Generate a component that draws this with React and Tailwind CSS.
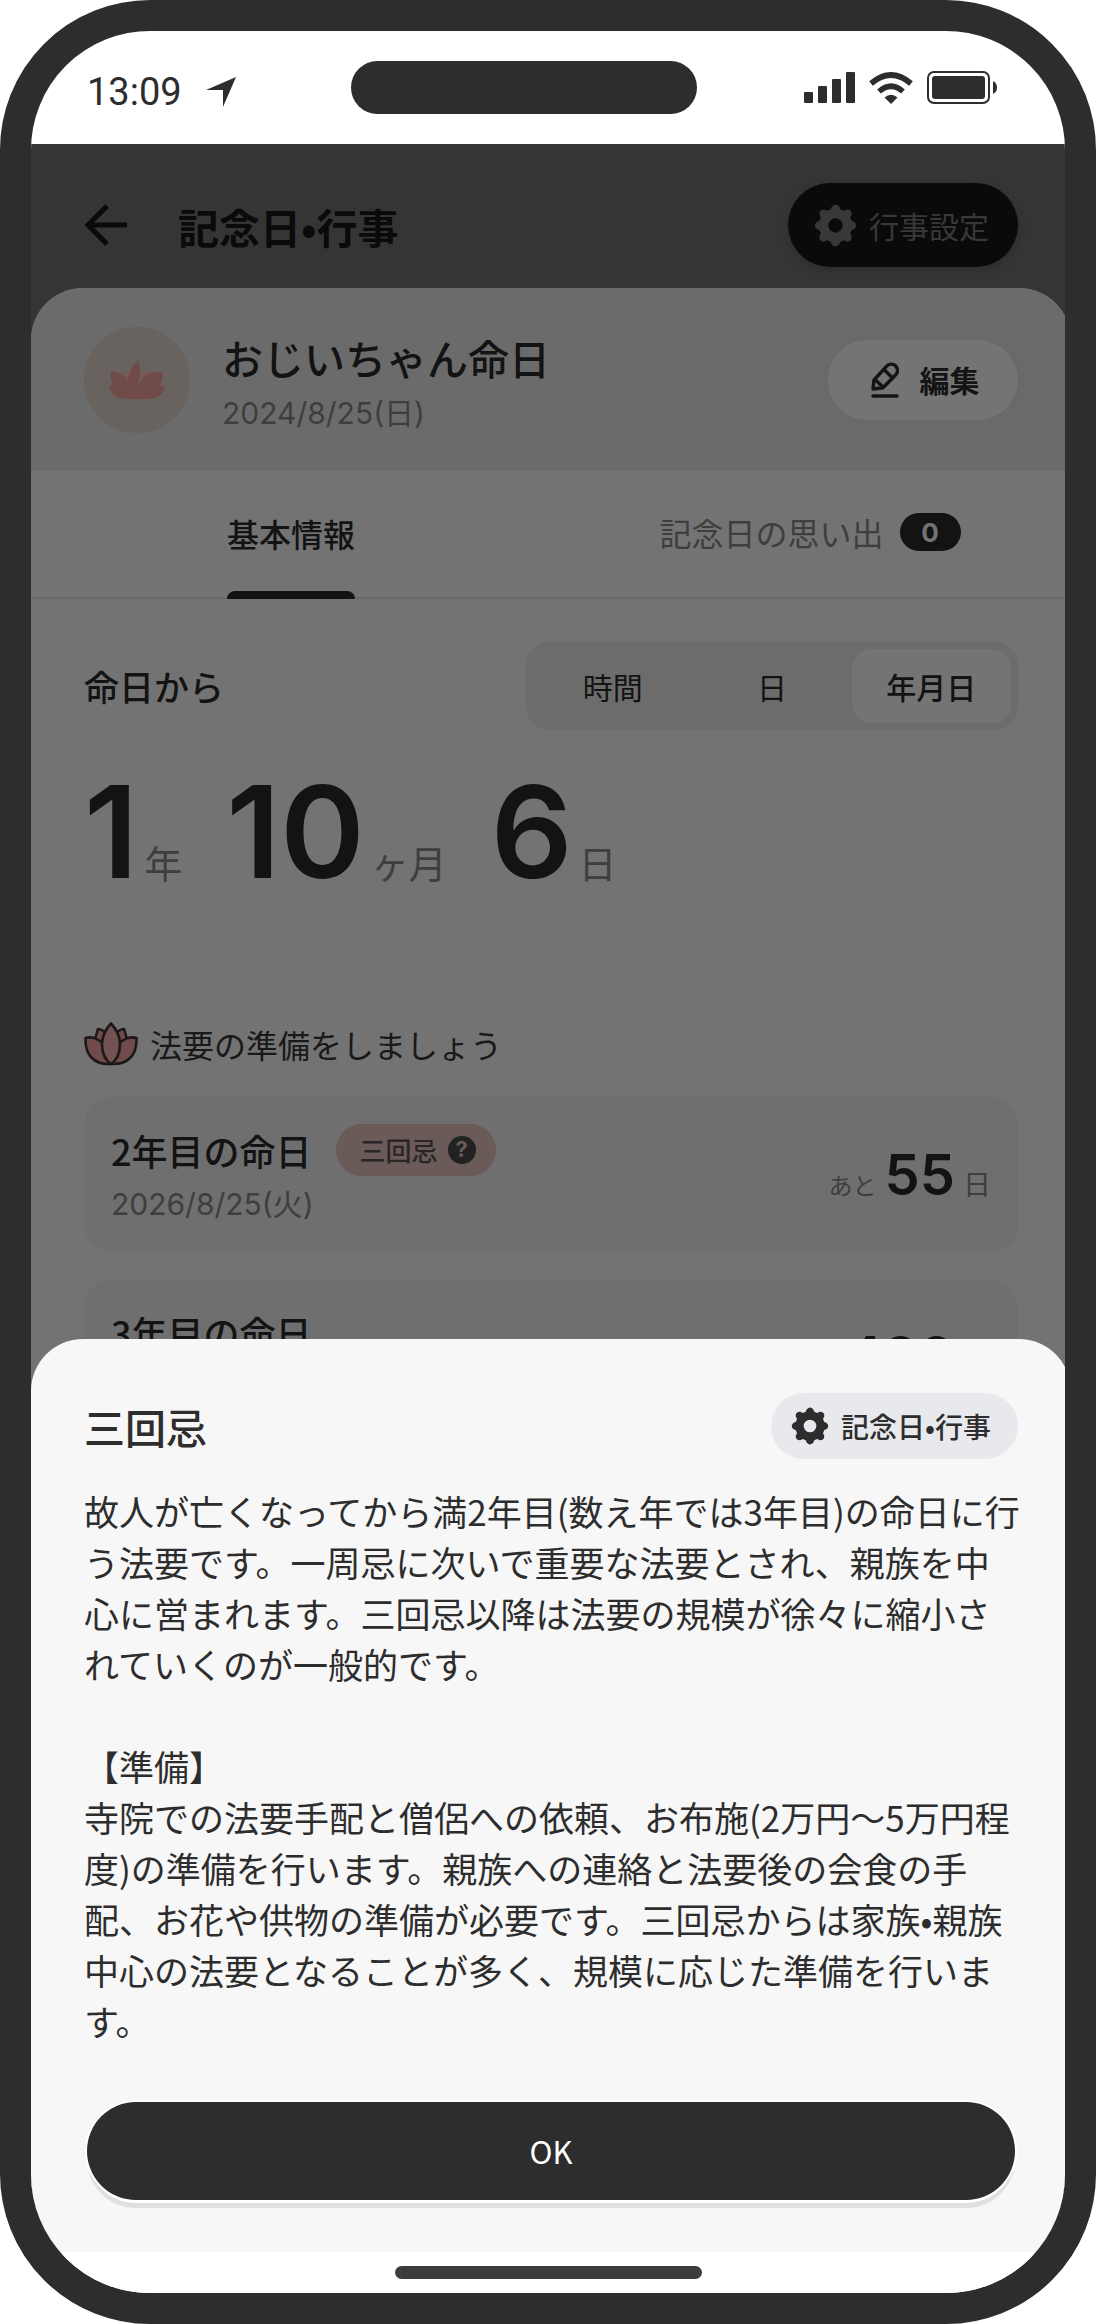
import { useState } from 'react';

function GearIcon({ className }) {
    return (
        <svg viewBox="0 0 24 24" className={className} fill="currentColor" aria-hidden="true">
            <path
                fillRule="evenodd"
                d="M9.9 1.6Q12-.9 14.1 1.6L14.7 3L16.6 3.8L18.2 3Q21.3 3 21 6L20.2 7.5L21 9.4L22.4 9.9Q24.7 12 22.4 14.1L21 14.6L20.2 16.5L21 18Q21.3 21 18.2 21L16.6 20.2L14.7 21L14.1 22.4Q12 24.9 9.9 22.4L9.3 21L7.4 20.2L5.8 21Q2.7 21 3 18L3.8 16.5L3 14.6L1.6 14.1Q-.7 12 1.6 9.9L3 9.4L3.8 7.5L3 6Q2.7 3 5.8 3L7.4 3.8L9.3 3ZM12 8A4 4 0 1 0 12 16A4 4 0 1 0 12 8Z"
            />
        </svg>
    );
}

function BackIcon() {
    return (
        <svg viewBox="0 0 44 44" className="size-11" fill="none" stroke="currentColor" strokeWidth="5" aria-hidden="true">
            <path d="M23 3L4 22L23 41M4 22H43" />
        </svg>
    );
}

function PencilIcon() {
    return (
        <svg viewBox="0 0 28 36" className="h-9 w-7" fill="none" stroke="currentColor" strokeWidth="3.4" strokeLinecap="round" strokeLinejoin="round" aria-hidden="true">
            <path d="M2 27L3 18L15.5 4.3A6 6 0 0 1 25 12.5L12 25.7Z" />
            <path d="M13 7.5L21.5 16M4 17.5L12 25" />
            <path d="M2 34H26" />
        </svg>
    );
}

function LotusMark() {
    return (
        <svg viewBox="0 0 58 42" className="h-[42px] w-[58px]" aria-hidden="true">
            <path fill="#735b58" d="M12 14Q19 10 29 14Q40 10 47 14L36 26H21Z" />
            <path fill="#714b4a" d="M30 1Q34 10 31 19L29 27L36 18Q43 12 55 13Q55 20 52 26L57 28Q55 40 38 40H20Q4 40 1 28L5 25Q2 20 3 12Q15 13 20 22Q21 9 30 1Z" />
        </svg>
    );
}

function LotusIcon() {
    return (
        <svg viewBox="0 0 54 44" className="h-11 w-[54px]" fill="#714b4a" stroke="#1b1919" strokeWidth="2.6" strokeLinejoin="round" aria-hidden="true">
            <path d="M11 17L14 7Q20 8 23 12L18 24ZM43 17L40 7Q34 8 31 12L36 24Z" />
            <path d="M1.5 16C8 14 15 17 19 22L27 42C10 43 1 33 1.5 16Z" />
            <path d="M52.5 16C46 14 39 17 35 22L27 42C44 43 53 33 52.5 16Z" />
            <path fill="#735351" d="M27 1.5C33 8 36 14 36 22C36 30 33 38 27 42C21 38 18 30 18 22C18 14 21 8 27 1.5Z" />
        </svg>
    );
}

function StatusBar() {
    return (
        <div className="grid h-[113px] shrink-0 grid-cols-[320px_346px_minmax(0,1fr)] items-center text-[#2d2d2d]">
            <div className="flex items-center gap-6 pt-2 pl-14">
                <span className="font-[Roboto] text-[38px] leading-none">13:09</span>
                <svg viewBox="0 0 30 30" className="size-[30px]" fill="currentColor" aria-hidden="true">
                    <path d="M30 0L17 30V13H0Z" />
                </svg>
            </div>
            <div className="h-[53px] rounded-full bg-[#2d2d2d]" />
            <div className="flex items-center justify-end gap-3.5 pr-[68px]">
                <svg viewBox="0 0 51 31" className="h-[31px] w-[51px]" fill="currentColor" aria-hidden="true">
                    <rect x="0" y="20" width="9" height="11" rx="1" />
                    <rect x="14" y="14" width="9" height="17" rx="1" />
                    <rect x="28" y="7" width="9" height="24" rx="1" />
                    <rect x="42" y="0" width="9" height="31" rx="1" />
                </svg>
                <svg viewBox="0 0 44 32" className="h-8 w-11" fill="none" stroke="currentColor" strokeWidth="5.6" aria-hidden="true">
                    <path d="M2 11.5Q22 -5.5 42 11.5" />
                    <path d="M10 19.5Q22 9 34 19.5" />
                    <path d="M15.5 25.5Q22 20 28.5 25.5L22 32Z" fill="currentColor" stroke="none" />
                </svg>
                <svg viewBox="0 0 70 33" className="h-[33px] w-[70px]" fill="currentColor" aria-hidden="true">
                    <rect x="1" y="1" width="61" height="31" rx="6" fill="none" stroke="currentColor" strokeWidth="2" />
                    <rect x="5" y="5" width="53" height="23" rx="3" />
                    <path d="M66 10Q70 12 70 16.5Q70 21 66 23Z" />
                </svg>
            </div>
        </div>
    );
}

function SummaryHeader() {
    return (
        <div className="flex h-[183px] items-center gap-8 bg-[#6b6b6b] px-[53px]">
            <div className="flex size-[106px] items-center justify-center rounded-full bg-[#68635f]">
                <LotusMark />
            </div>
            <div className="flex-1 pt-4">
                <h2 className="text-[41px] leading-[50px] font-medium text-[#131313]">おじいちゃん命日</h2>
                <p className='font-["Inter","Noto_Sans_CJK_JP",sans-serif] text-[30px] leading-[62px] text-[#3e3e3e]'>2024/8/25(日)</p>
            </div>
            <button type="button" className="flex h-20 w-[190px] items-center justify-center gap-[21px] rounded-full bg-[#747474] pl-1 text-[30px] font-bold text-[#141414] shadow-[0_0_12px_#676767]">
                <PencilIcon />
                編集
            </button>
        </div>
    );
}

function Tabs({ tab, onChange }) {
    return (
        <div role="tablist" className="grid h-[128px] grid-cols-2 border-b-2 border-[#696969] text-[32px]">
            <button type="button" role="tab" aria-selected={tab === 'info'} onClick={() => onChange('info')} className="-mb-0.5 flex flex-col items-center font-medium text-[#131313]">
                <span className="flex flex-1 items-center pt-1">基本情報</span>
                <span className="h-2 w-32 rounded-t-lg bg-[#131313]" />
            </button>
            <button type="button" role="tab" aria-selected={tab === 'memories'} onClick={() => onChange('memories')} className="flex items-center justify-center gap-4 pr-0.5 pb-1 font-normal text-[#3e3e3e]">
                記念日の思い出
                <span className='flex h-[38px] w-[61px] items-center justify-center rounded-full bg-[#131313] font-["Inter"] text-[26px] font-bold text-[#737373]'>0</span>
            </button>
        </div>
    );
}

const UNITS = ['時間', '日', '年月日'];

function UnitSwitch({ unit, onChange }) {
    return (
        <div className="grid h-[88px] w-[492px] grid-cols-3 rounded-[24px] bg-[#6c6c6c] p-[7px] text-[30px] text-[#131313]">
            {UNITS.map((name) => (
                <button
                    key={name}
                    type="button"
                    onClick={() => onChange(name)}
                    className={name === unit ? 'rounded-[20px] bg-[#747474] font-medium' : 'font-normal'}
                >
                    {name}
                </button>
            ))}
        </div>
    );
}

function Elapsed({ value, unit }) {
    return (
        <div className="flex items-baseline gap-1.5">
            <span className='font-["Inter"] text-[128px] leading-[128px] font-semibold text-[#131313]'>{value}</span>
            <span className="text-[38px] leading-none font-normal text-[#3e3e3e]">{unit}</span>
        </div>
    );
}

function AnniversaryCard({ title, date, days, badge }) {
    return (
        <li className="flex h-[155px] items-center justify-between rounded-[28px] bg-[#6f6f6f] px-[27px]">
            <div className="pt-1.5">
                <div className="flex h-[52px] items-center gap-6">
                    <h4 className="text-[36px] leading-none font-medium text-[#131313]">{title}</h4>
                    {badge && (
                        <button type="button" className="flex h-[52px] items-center gap-2.5 rounded-full bg-[#6a5b58] pr-5 pl-6 text-[26px] font-medium text-[#292626]">
                            {badge}
                            <span className='flex size-7 items-center justify-center rounded-full bg-[#232222] font-["Inter"] text-[22px] font-bold text-[#6a5b58]'>?</span>
                        </button>
                    )}
                </div>
                <p className='font-["Inter","Noto_Sans_CJK_JP",sans-serif] text-[30px] leading-[56px] text-[#3e3e3e]'>{date}</p>
            </div>
            <div className="flex items-baseline gap-2 text-[#3e3e3e]">
                <span className="text-[24px] leading-none">あと</span>
                <span className='font-["Inter"] text-[56px] leading-none font-semibold text-[#131313]'>{days}</span>
                <span className="text-[28px] leading-none">日</span>
            </div>
        </li>
    );
}

function InfoSheet() {
    return (
        <section className="z-10 col-start-1 row-start-1 self-end rounded-t-[52px] bg-[#f7f7f7] px-[53px] pt-[54px] pb-[52px] text-[#2d2d2d]">
            <div className="flex items-center justify-between">
                <h2 className="text-[41px] leading-[66px] font-medium">三回忌</h2>
                <button type="button" className="flex h-[66px] items-center gap-3 rounded-full bg-[#e8e9ed] pr-[27px] pl-5 text-[28px] font-medium">
                    <GearIcon className="size-[38px]" />
                    <span>記念日•行事</span>
                </button>
            </div>
            <p className="mt-[26px] text-[35px] leading-[51px] whitespace-nowrap">
                故人が亡くなってから満2年目(数え年では3年目)の命日に行<br />
                う法要です。一周忌に次いで重要な法要とされ、親族を中<br />
                心に営まれます。三回忌以降は法要の規模が徐々に縮小さ<br />
                れていくのが一般的です。<br />
                <br />
                【準備】<br />
                寺院での法要手配と僧侶への依頼、お布施(2万円〜5万円程<br />
                度)の準備を行います。親族への連絡と法要後の会食の手<br />
                配、お花や供物の準備が必要です。三回忌からは家族•親族<br />
                中心の法要となることが多く、規模に応じた準備を行いま<br />
                す。
            </p>
            <div className="mt-14 px-[3px]">
                <button type="button" className="h-[98px] w-full rounded-full bg-[#2d2d2d] text-[31px] text-white shadow-[0_0_0_2px_#ffffff,0_3px_0_0_#ffffff,0_8px_1px_0_#dfdfdf]">
                    OK
                </button>
            </div>
        </section>
    );
}

export default function App() {
    const [tab, setTab] = useState('info');
    const [unit, setUnit] = useState('年月日');

    return (
        <div className='flex h-screen flex-col overflow-hidden rounded-[150px] border-[31px] border-[#2d2d2d] bg-white font-["Noto_Sans_CJK_JP",sans-serif]'>
            <StatusBar />

            {/* app area: the page and the sheet share one grid cell */}
            <div className="-mr-1.5 grid min-h-0 flex-1 grid-cols-[minmax(0,1fr)] grid-rows-[minmax(0,1fr)] bg-[#353535]">
                <main className="col-start-1 row-start-1 flex flex-col overflow-hidden">
                    <header className="flex h-36 shrink-0 items-center px-[53px] pt-[18px] text-[#0a0a0a]">
                        <button type="button" aria-label="戻る">
                            <BackIcon />
                        </button>
                        <h1 className="ml-[50px] flex-1 pt-1 text-[41px] font-bold">記念日•行事</h1>
                        <button type="button" className="flex h-[84px] w-[230px] items-center gap-3 rounded-full bg-[#0a0a0a] pl-[26px] text-[30px] text-[#383838] shadow-[0_4px_8px_#2e2e2e]">
                            <GearIcon className="size-[43px]" />
                            行事設定
                        </button>
                    </header>

                    <div className="flex-1 overflow-hidden rounded-t-[52px] bg-[#737373]">
                        <SummaryHeader />
                        <Tabs tab={tab} onChange={setTab} />

                        <div className="px-[53px] pt-[43px]">
                            <div className="flex items-center justify-between">
                                <h3 className="text-[35px] font-medium text-[#131313]">命日から</h3>
                                <UnitSwitch unit={unit} onChange={setUnit} />
                            </div>

                            <div className="mt-[38px] flex items-baseline gap-11">
                                <Elapsed value="1" unit="年" />
                                <Elapsed value="10" unit="ヶ月" />
                                <Elapsed value="6" unit="日" />
                            </div>

                            <div className="mt-[126px] flex items-center gap-3">
                                <LotusIcon />
                                <h3 className="text-[32px] leading-[44px] text-[#191919]">法要の準備をしましょう</h3>
                            </div>

                            <ul className="mt-[31px] flex flex-col gap-[27px]">
                                <AnniversaryCard title="2年目の命日" date="2026/8/25(火)" days="55" badge="三回忌" />
                                <AnniversaryCard title="3年目の命日" date="2027/8/25(水)" days="420" />
                            </ul>
                        </div>
                    </div>
                </main>

                <InfoSheet />
            </div>

            <div className="flex h-[41px] shrink-0 justify-center bg-white pt-3.5">
                <div className="h-[13px] w-[307px] rounded-full bg-[#3c3c3c]" />
            </div>
        </div>
    );
}
